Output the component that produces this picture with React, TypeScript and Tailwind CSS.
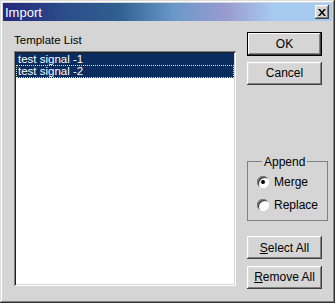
import React from 'react';

const raised =
  'shadow-[inset_-1px_-1px_0_#404040,inset_1px_1px_0_#ffffff,inset_-2px_-2px_0_#808080,inset_2px_2px_0_#dcdcdc]';

function Button({ children, isDefault = false }: { children: React.ReactNode; isDefault?: boolean }) {
  return (
    <button
      className={
        isDefault
          ? 'h-[24px] w-[75px] border border-black bg-[#d5d5d5] text-[12px] text-black shadow-[inset_-1px_-1px_0_#404040,inset_1px_1px_0_#ffffff,inset_-2px_-2px_0_#808080]'
          : `h-[23px] w-[75px] bg-[#d5d5d5] text-[12px] text-black ${raised}`
      }
    >
      {children}
    </button>
  );
}

function Radio({ label, checked }: { label: string; checked?: boolean }) {
  return (
    <div className="flex h-[14px] items-center gap-[5px]">
      <span className="flex h-[12px] w-[12px] items-center justify-center rounded-full bg-white shadow-[inset_1px_1px_0_#808080,inset_-1px_-1px_0_#ffffff,inset_2px_2px_0_#404040]">
        {checked && <span className="h-[4px] w-[4px] rounded-full bg-black" />}
      </span>
      <span className="text-[12px] leading-[14px] text-black">{label}</span>
    </div>
  );
}

export default function App() {
  return (
    <div
      className="flex h-[303px] w-[335px] flex-col bg-[#d5d5d5] p-[3px] shadow-[inset_-1px_-1px_0_#303030,inset_1px_1px_0_#dcdcdc,inset_-2px_-2px_0_#808080,inset_2px_2px_0_#ffffff]"
      style={{ fontFamily: '"Liberation Sans", Arial, sans-serif' }}
    >
      {/* Title bar */}
      <div className="flex h-[18px] items-center justify-between bg-[linear-gradient(90deg,#24287e_0%,#2c4f8a_20%,#2f5f8f_35%,#6a98c9_52%,#9a9bd0_68%,#a6caf0_82%,#a6caf0_100%)] pl-[2px] pr-[3px]">
        <span className="text-[13px] leading-none text-white">Import</span>
        <span className={`flex h-[14px] w-[14px] items-center justify-center bg-[#d5d5d5] ${raised}`}>
          <svg width="8" height="7" viewBox="0 0 8 7">
            <path d="M0 0h2l2 2.5 2-2.5h2l-3 3.5 3 3.5h-2l-2-2.5-2 2.5h-2l3-3.5z" fill="#000" />
          </svg>
        </span>
      </div>

      {/* Client */}
      <div className="flex flex-1 pl-[11px] pr-[10px]">
        <div className="flex w-[222px] flex-col pt-[12px]">
          <span className="text-[11.5px] leading-[14px] text-black">Template List</span>
          <div className="mt-[4px] h-[235px] bg-white p-[2px] shadow-[inset_1px_1px_0_#808080,inset_-1px_-1px_0_#ffffff,inset_2px_2px_0_#202020,inset_-2px_-2px_0_#d5d5d5]">
            <div className="h-[12px] bg-[#0a2c5e] pl-[2px] text-[11.5px] leading-[12px] text-white">test signal -1</div>
            <div className="h-[13px] border border-dotted border-[#e8e890] bg-[#0a2c5e] pl-[1px] text-[11.5px] leading-[11px] text-white">
              test signal -2
            </div>
          </div>
        </div>

        <div className="ml-[11px] flex w-[75px] flex-col pt-[11px]">
          <Button isDefault>OK</Button>
          <div className="mt-[4px]">
            <Button>Cancel</Button>
          </div>

          <fieldset className="mt-[70px] h-[66px] border border-[#808080] px-[9px] pb-0 pt-[6px]">
            <legend className="ml-[5px] px-[2px] text-[12px] leading-[14px] text-black">Append</legend>
            <div className="flex flex-col gap-[9px]">
              <Radio label="Merge" checked />
              <Radio label="Replace" />
            </div>
          </fieldset>

          <div className="mt-[14px]">
            <Button>
              <span className="underline">S</span>elect All
            </Button>
          </div>
          <div className="mt-[5px]">
            <Button>
              <span className="underline">R</span>emove All
            </Button>
          </div>
        </div>
      </div>
    </div>
  );
}
